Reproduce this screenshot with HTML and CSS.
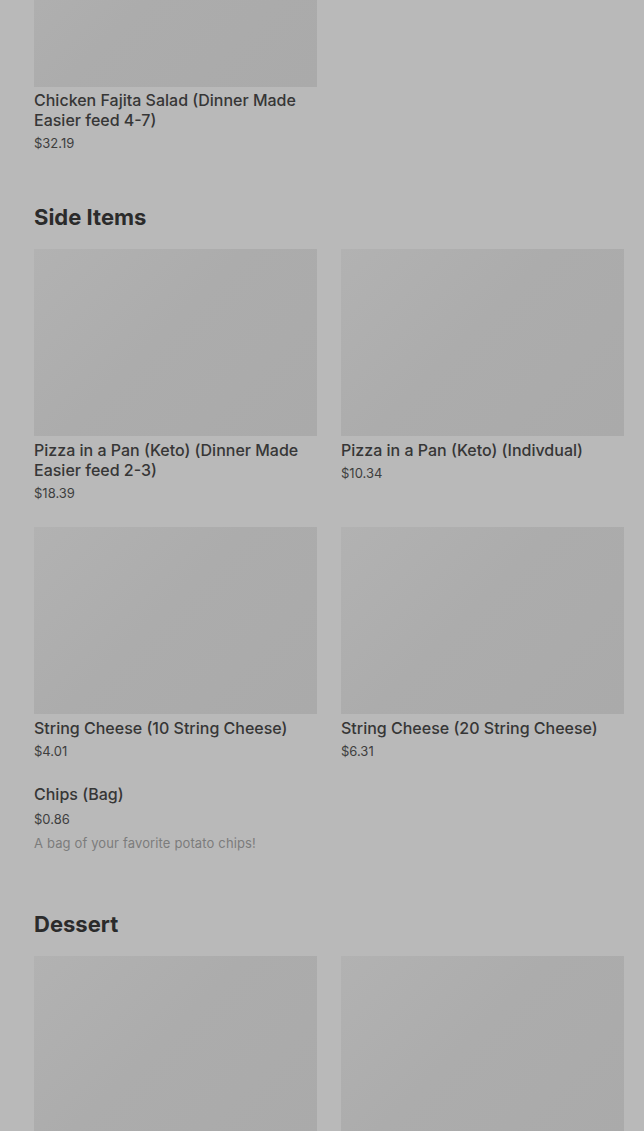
FILE: index.html
```html
<!DOCTYPE html>
<html>
<head>
	<meta charset="utf-8">
	<title>Menu</title>
	<link rel="stylesheet" href="styles.css">
</head>
<body>
	<div class="page">
		<section class="menuSection firstSection">
			<div class="itemGrid">
				<div class="item">
					<div class="itemImage"></div>
					<div class="itemName">Chicken Fajita Salad (Dinner Made Easier feed 4-7)</div>
					<div class="itemPrice">$32.19</div>
				</div>
			</div>
		</section>

		<section class="menuSection">
			<h2 class="sectionTitle">Side Items</h2>
			<div class="itemGrid">
				<div class="item">
					<div class="itemImage"></div>
					<div class="itemName">Pizza in a Pan (Keto) (Dinner Made Easier feed 2-3)</div>
					<div class="itemPrice">$18.39</div>
				</div>
				<div class="item">
					<div class="itemImage"></div>
					<div class="itemName">Pizza in a Pan (Keto) (Indivdual)</div>
					<div class="itemPrice">$10.34</div>
				</div>
				<div class="item">
					<div class="itemImage"></div>
					<div class="itemName">String Cheese (10 String Cheese)</div>
					<div class="itemPrice">$4.01</div>
				</div>
				<div class="item">
					<div class="itemImage"></div>
					<div class="itemName">String Cheese (20 String Cheese)</div>
					<div class="itemPrice">$6.31</div>
				</div>
				<div class="item noImage">
					<div class="itemName">Chips (Bag)</div>
					<div class="itemPrice">$0.86</div>
					<div class="itemDesc">A bag of your favorite potato chips!</div>
				</div>
			</div>
		</section>

		<section class="menuSection">
			<h2 class="sectionTitle">Dessert</h2>
			<div class="itemGrid">
				<div class="item">
					<div class="itemImage"></div>
				</div>
				<div class="item">
					<div class="itemImage"></div>
				</div>
			</div>
		</section>
	</div>
</body>
</html>
```

FILE: styles.css
```css
body{
	margin: 0;
	font-family: Inter, "Liberation Sans", sans-serif;
	color: #363636;
	background-color: #b9b9b9;
}
.page{
	margin-top: -100px;
	padding: 0 20px 0 34px;
}
.menuSection{
	margin-bottom: 50px;
}
.firstSection .itemImage{
	margin-bottom: 3px;
}
.sectionTitle{
	margin: 0 0 18px 0;
	font-size: 22px;
	line-height: 28px;
	font-weight: 700;
	color: #2b2b2b;
}
.itemGrid{
	display: grid;
	grid-template-columns: 283px 283px;
	column-gap: 24px;
	row-gap: 24px;
	align-items: start;
}
.itemImage{
	height: 187px;
	margin-bottom: 4px;
	background: linear-gradient(135deg, #b2b2b2 0%, #acacac 45%, #aaaaaa 100%);
}
.itemName{
	font-size: 16px;
	line-height: 20px;
	font-weight: 500;
	color: #363636;
}
.itemPrice{
	margin-top: 3px;
	font-size: 13px;
	line-height: 20px;
	color: #3e3e3e;
}
.noImage{
	margin-top: -1px;
}
.noImage .itemPrice{
	margin-top: 5px;
}
.itemDesc{
	margin-top: 4px;
	margin-bottom: 7px;
	font-size: 13px;
	line-height: 20px;
	letter-spacing: 0.14px;
	color: #7c7c7c;
}
```
